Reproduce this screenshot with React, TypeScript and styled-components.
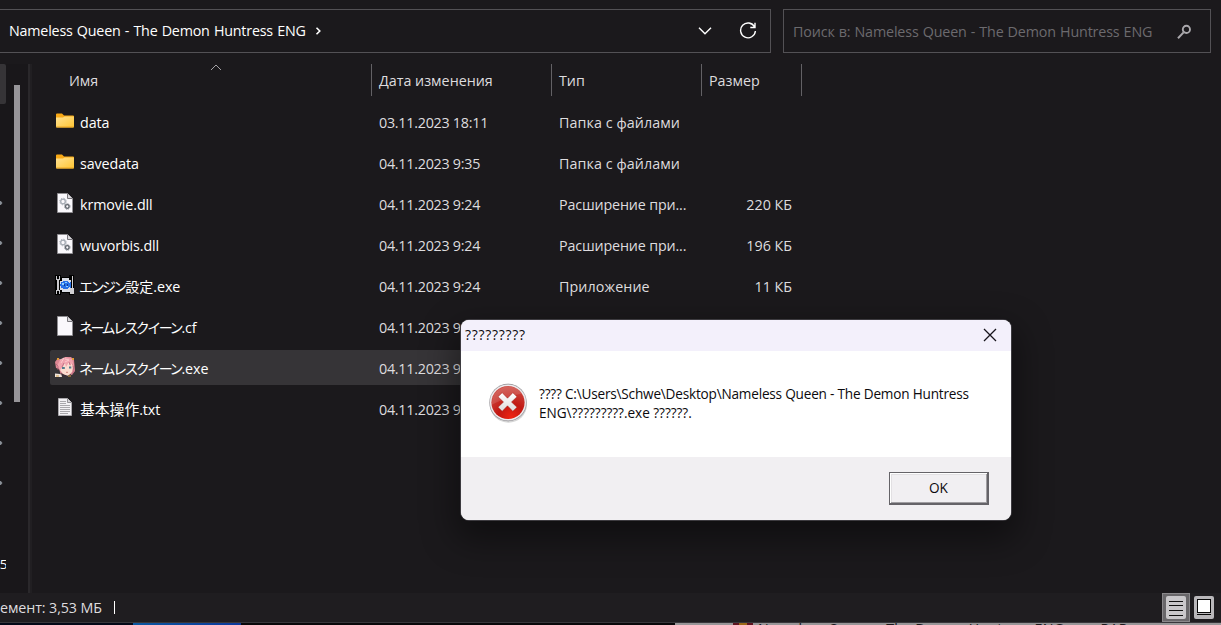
import React from "react";
import styled, { createGlobalStyle } from "styled-components";

const GlobalStyle = createGlobalStyle`
  * { box-sizing: border-box; }
  body { margin: 0; background: #1b191c; overflow: hidden; }
`;

const Screen = styled.div`
  position: relative;
  display: flex;
  flex-direction: column;
  width: 1221px;
  height: 625px;
  overflow: hidden;
  background: #1b191c;
  color: #dedcdf;
  font-family: "Open Sans", "Noto Sans", "Noto Sans CJK JP", sans-serif;
  font-size: 14.3px;
  letter-spacing: -0.1px;
  line-height: 20px;
  white-space: nowrap;
`;

const Toolbar = styled.div`
  display: flex;
  flex: none;
  gap: 12px;
  height: 64px;
  padding: 9px 10px 11px 0;
`;

const AddressBar = styled.div`
  display: flex;
  align-items: center;
  width: 771px;
  height: 44px;
  padding: 0 13px 0 9px;
  border: 1px solid #535155;
  border-left: 0;
  color: #fff;
`;

const Crumb = styled.span`
  width: 296px;
  letter-spacing: -0.2px;
  word-spacing: 0.7px;
`;

const CrumbArrow = styled.svg`
  margin: 0 auto 0 9px;
`;

const RefreshIcon = styled.svg`
  margin-left: 27px;
`;

const SearchBox = styled.div`
  display: flex;
  align-items: center;
  justify-content: space-between;
  flex: 1;
  height: 44px;
  padding: 2px 18px 0 9px;
  border: 1px solid #535155;
  color: #6c6a6e;
`;

const SearchText = styled.span`
  letter-spacing: -0.14px;
  word-spacing: 0.5px;
`;

const Body = styled.div`
  display: flex;
  flex: none;
  height: 529px;
`;

const NavPane = styled.div`
  display: flex;
  width: 32px;
  background: #19171a;
`;

const NavTree = styled.div`
  width: 6px;
  overflow: hidden;
`;

const NavItem = styled.div<{ $selected?: boolean }>`
  display: flex;
  align-items: center;
  justify-content: flex-end;
  height: 40px;
  background: ${(p) => (p.$selected ? "#363437" : "transparent")};
  border-radius: 0 2px 2px 0;
  color: #fff;
  font-size: 13.5px;
`;

const NavLabel = styled.span`
  margin-right: -1.5px;
`;

const NavArrow = styled.svg`
  margin: 0 auto 3px 0;
`;

const ScrollThumb = styled.div`
  width: 6px;
  height: 317px;
  margin: 21px 8px 0;
  background: #979599;
`;

const PaneDivider = styled.div`
  width: 4px;
  background: #211f22;
  border-left: 2px solid #2a282b;
`;

const FileList = styled.div`
  flex: 1;
  padding-left: 18px;
`;

const HeaderRow = styled.div`
  display: grid;
  grid-template-columns: 322px 180px 150px 100px;
  height: 32px;
  margin-bottom: 8px;
`;

const HeaderCell = styled.div<{ $indent: number }>`
  display: flex;
  align-items: center;
  padding: 2px 0 0 ${(p) => p.$indent}px;
  border-right: 1px solid #636165;
  letter-spacing: 0;
`;

const SortArrow = styled.svg`
  margin: -28px 0 0 112px;
`;

const Row = styled.div<{ $selected?: boolean }>`
  display: grid;
  grid-template-columns: 329px 180px 133px 100px;
  align-items: center;
  width: 752px;
  height: 35px;
  margin-bottom: 6px;
  background: ${(p) => (p.$selected ? "#363437" : "transparent")};
  border-radius: 2px;
`;

const NameCell = styled.div`
  display: flex;
  align-items: center;
  gap: 5px;
  padding-left: 5px;
  color: #fff;
`;

const IconSlot = styled.span`
  display: flex;
  width: 20px;
  height: 20px;
  margin-top: -1px;
`;

const FileName = styled.span`
  padding-top: 2px;
  letter-spacing: -0.1px;
`;

const Kana = styled.span`
  font-family: "Noto Sans CJK JP", sans-serif;
  font-size: 14px;
  letter-spacing: -2.55px;
  margin: 0 0.5px 0 -1px;
`;

const Kanji = styled.span<{ $size: number }>`
  font-family: "Noto Sans CJK JP", sans-serif;
  font-size: ${(p) => p.$size}px;
  letter-spacing: 0;
`;

const Cell = styled.div<{ $spacing?: number }>`
  padding-top: 2px;
  letter-spacing: ${(p) => p.$spacing ?? 0}px;
`;

const SizeCell = styled(Cell)`
  text-align: right;
`;

const StatusBar = styled.div`
  display: flex;
  flex: none;
  align-items: center;
  height: 29px;
  padding-right: 3px;
  background: #1f1d20;
`;

const StatusText = styled.span`
  width: 102px;
  letter-spacing: -0.1px;
`;

const StatusDivider = styled.div`
  width: 1px;
  height: 13px;
  margin: 0 auto 0 12px;
  background: #fff;
`;

const ViewButton = styled.div<{ $active?: boolean }>`
  display: flex;
  align-items: center;
  justify-content: center;
  width: 28px;
  height: 29px;
  background: ${(p) => (p.$active ? "#69676a" : "transparent")};
  border: 1px solid ${(p) => (p.$active ? "#8a888b" : "transparent")};
`;

const Taskbar = styled.div`
  display: flex;
  flex: none;
  height: 3px;
  border-top: 1px solid #38373b;
  overflow: hidden;
`;

const Strip = styled.div<{ $width: number; $fill: string }>`
  width: ${(p) => p.$width}px;
  background: ${(p) => p.$fill};
`;

const BackWindow = styled.div`
  display: flex;
  flex: 1;
  gap: 5px;
  padding-left: 58px;
  background: #989698;
  color: #1b191c;
  font-size: 14.3px;
  letter-spacing: 0.15px;
`;

const BackIcon = styled.div`
  width: 20px;
  height: 3px;
  background: linear-gradient(90deg, #5e1420 30%, #9c6a18 30% 70%, #5e1420 70%);
`;

const BackTitle = styled.span`
  margin-top: -4px;
`;

const Dialog = styled.div`
  position: absolute;
  left: 461px;
  top: 320px;
  display: flex;
  flex-direction: column;
  width: 550px;
  height: 200px;
  border-radius: 8px;
  overflow: hidden;
  background: #fff;
  color: #0c0a0d;
  box-shadow: 0 0 0 1px #3d3b40, 0 14px 34px 6px rgba(0, 0, 0, 0.42);
`;

const DialogTitle = styled.div`
  display: flex;
  align-items: center;
  justify-content: space-between;
  height: 31px;
  padding: 0 14px 2px 4px;
  background: #f3f0fb;
  font-size: 14px;
  letter-spacing: 0.7px;
`;

const DialogContent = styled.div`
  display: flex;
  height: 106px;
  padding: 32px 0 0 27px;
  gap: 11px;
`;

const Message = styled.div`
  padding-top: 1px;
  font-size: 13.6px;
  line-height: 19px;
  white-space: pre;
`;

const MessageLine = styled.div<{ $spacing: number }>`
  letter-spacing: ${(p) => p.$spacing}px;
`;

const DialogFooter = styled.div`
  display: flex;
  justify-content: flex-end;
  flex: 1;
  padding: 15px 22px 0 0;
  background: #f1eff2;
`;

const OkButton = styled.button`
  width: 100px;
  height: 33px;
  padding: 0 0 2px;
  background: #f1eff2;
  border: 1px solid #656368;
  border-right-width: 2px;
  border-bottom-width: 2px;
  box-shadow: inset 1px 1px #fff, inset -1px -1px #a09ea2, inset 2px 2px #e2e0e3;
  color: #0c0a0d;
  font-family: inherit;
  font-size: 13.6px;
`;

const FolderIcon = () => (
  <svg width="20" height="20" viewBox="0 0 20 20">
    <defs>
      <linearGradient id="folder" x1="0" y1="0" x2="1" y2="1">
        <stop offset="0" stopColor="#ffe294" />
        <stop offset="1" stopColor="#ffc532" />
      </linearGradient>
    </defs>
    <path d="M1 3.5q0-1 1-1h5l2 2h9q1 0 1 1v4H1z" fill="#f9a915" />
    <path d="M1 6.5h7l1.5-1H19v10q0 1-1 1H2q-1 0-1-1z" fill="url(#folder)" />
    <path d="M1.3 16h17.4" stroke="#eca522" />
  </svg>
);

const PageIcon = ({ children }: { children?: React.ReactNode }) => (
  <svg width="20" height="20" viewBox="0 0 20 20">
    <path d="M2.5 .5h10l5 5v14h-15z" fill="#faf8fc" stroke="#8f8d91" />
    <path d="M12.5 .5v5h5" fill="#dad8dc" stroke="#77757a" />
    {children}
  </svg>
);

const DllIcon = () => (
  <PageIcon>
    <circle cx="8" cy="8.5" r="2.3" fill="none" stroke="#a5abb4" strokeWidth="1.3" />
    <circle cx="8" cy="8.5" r="3.3" fill="none" stroke="#a5abb4" strokeDasharray="1.2 1.4" />
    <circle cx="12.3" cy="13.5" r="1.8" fill="none" stroke="#5d636b" strokeWidth="1.3" />
    <circle cx="12.3" cy="13.5" r="2.7" fill="none" stroke="#5d636b" strokeDasharray="1 1.1" />
  </PageIcon>
);

const TextIcon = () => (
  <svg width="20" height="20" viewBox="0 0 20 20">
    <path d="M3.5 .5h9l4 4v13h-13z" fill="#f3f1f4" stroke="#aaa8ac" />
    <path d="M12.5 .5v4h4" fill="#d6d4d8" stroke="#939195" />
    <path d="M5 3.5h6M5 5.5h6M5 7.5h10M5 9.5h10M5 11.5h10M5 13.5h10M5 15.5h8" stroke="#a9a7ab" />
  </svg>
);

const EngineIcon = () => (
  <svg width="20" height="20" viewBox="0 0 20 20" shapeRendering="crispEdges">
    <path d="M0 0h6v2h8V0h5v20h-5v-2H6v2H0z" fill="#000" />
    <path d="M7 3h7v2h2v10h-1v2H7v-2H5V6h2z" fill="#d9dce5" />
    <path d="M6 7h2V6h5v1h1v1h1V7h1v6h-1v-1h-1v1h-1v1H8v-1H6v-2H5V9h1z" fill="#2671e8" />
    <path d="M7 8h2v2H7zM10 7h2v1h-2zM11 11h2v1h-2z" fill="#8bd0ff" />
    <path d="M9 9h1v2H9zM12 9h1v2h-1z" fill="#123a92" />
    <path d="M1 1h1v3h2V1h1v4H4v10h1v4H4v-3H2v3H1v-4h1V5H1z" fill="#c9c8cd" />
    <path d="M17 1h1v12h1v6h-4v-6h2z" fill="#d2d0d4" />
  </svg>
);

const PortraitIcon = () => (
  <svg width="20" height="20" viewBox="0 0 20 20">
    <path d="M0 5l3-4 3 2 4-3h6l3 3 1 11-3 4H6L4 12 1 11z" fill="#dc8794" />
    <path d="M5 7l4-4 7 2 2 5-1 5-4 4-5-2-3-4z" fill="#fbdcd0" />
    <path d="M2 9l3-6 6-3 6 2 2 7-2-3-2 3-1-4-3 5-1-4-3 5-2 2z" fill="#f0a3ae" />
    <path d="M5 3l4-2-3 5M10 2l4 1-4 2" fill="none" stroke="#ffd2d3" strokeWidth=".8" />
    <path d="M1 7l2 2v4M18 9l1 5-2 3M9 6l-2 4M14 5l1 3" fill="none" stroke="#b4637a" strokeWidth=".8" />
    <path d="M7 11h2.8M14 10.5h2.3" stroke="#527c8c" strokeWidth="1.8" />
    <path d="M11 15.3h2" stroke="#c16b66" strokeWidth=".8" />
    <path d="M2 1h2v2H2zM17 1h2v2h-2z" fill="#e19a38" />
    <path d="M0 16.5l5 .5 4 2v1H0z" fill="#f0e5de" />
    <path d="M6 16l6 3 4-2 1 3H7z" fill="#393038" />
    <path d="M1 19h3M13 19h3" stroke="#d3a147" />
  </svg>
);

const ErrorIcon = () => (
  <svg width="40" height="41" viewBox="0 0 40 41">
    <defs>
      <linearGradient id="rim" x1="0" y1="0" x2="0" y2="1">
        <stop offset="0" stopColor="#89878b" />
        <stop offset=".3" stopColor="#b9b6b9" />
        <stop offset="1" stopColor="#8d8b90" />
      </linearGradient>
      <radialGradient id="red" cx=".6" cy=".95" r=".9">
        <stop offset="0" stopColor="#f02412" />
        <stop offset=".45" stopColor="#c21812" />
        <stop offset="1" stopColor="#cc4a42" />
      </radialGradient>
      <linearGradient id="cross" x1="0" y1="0" x2="0" y2="1">
        <stop offset="0" stopColor="#fff" />
        <stop offset="1" stopColor="#dedbdc" />
      </linearGradient>
    </defs>
    <ellipse cx="20.5" cy="21.7" rx="18.5" ry="18" fill="#000" opacity=".16" />
    <circle cx="20" cy="19.5" r="18.8" fill="url(#rim)" />
    <circle cx="20" cy="19.5" r="18" fill="#eeebed" />
    <circle cx="20" cy="19.5" r="16.6" fill="url(#red)" />
    <path d="M4 21.5A16.5 16.5 0 0 1 34 10.5Q22 12.500 4 21.5z" fill="#fff" opacity=".13" />
    <path d="M14.200 9.700l5.300 5.500 5.300-5.500 4.200 4.100-5.500 5.200 5.500 5.200-4.200 4.100-5.300-5.500-5.300 5.500-4.200-4.100 5.500-5.200-5.500-5.200z" fill="url(#cross)" stroke="#a2221c" strokeWidth=".5" />
  </svg>
);

const icons = {
  folder: FolderIcon,
  dll: DllIcon,
  engine: EngineIcon,
  page: PageIcon,
  portrait: PortraitIcon,
  text: TextIcon,
};

type FileItem = {
  icon: keyof typeof icons;
  kana?: string;
  kanji?: string;
  name: string;
  date: string;
  type?: string;
  typeSpacing?: number;
  size?: string;
  selected?: boolean;
};

const files: FileItem[] = [
  { icon: "folder", name: "data", date: "03.11.2023 18:11", type: "Папка с файлами", typeSpacing: 0.08 },
  { icon: "folder", name: "savedata", date: "04.11.2023 9:35", type: "Папка с файлами", typeSpacing: 0.08 },
  { icon: "dll", name: "krmovie.dll", date: "04.11.2023 9:24", type: "Расширение при...", size: "220 КБ" },
  { icon: "dll", name: "wuvorbis.dll", date: "04.11.2023 9:24", type: "Расширение при...", size: "196 КБ" },
  { icon: "engine", kana: "エンジン", kanji: "設定", name: ".exe", date: "04.11.2023 9:24", type: "Приложение", typeSpacing: 0.1, size: "11 КБ" },
  { icon: "page", kana: "ネームレスクイーン", name: ".cf", date: "04.11.2023 9:24" },
  { icon: "portrait", kana: "ネームレスクイーン", name: ".exe", date: "04.11.2023 9:24", selected: true },
  { icon: "text", kanji: "基本操作", name: ".txt", date: "04.11.2023 9:24" },
];

const navItems = Array.from({ length: 13 }, (_, i) => i);

export default function App() {
  return (
    <Screen>
      <GlobalStyle />
      <Toolbar>
        <AddressBar>
          <Crumb>Nameless Queen - The Demon Huntress ENG</Crumb>
          <CrumbArrow width="8" height="10" viewBox="0 0 8 10">
            <path d="M2.5 1.7L5.8 5 2.5 8.3" fill="none" stroke="#fff" strokeWidth="1.6" />
          </CrumbArrow>
          <svg width="14" height="10" viewBox="0 0 14 10">
            <path d="M1 1.8l6 6 6-6" fill="none" stroke="#fff" strokeWidth="1.4" />
          </svg>
          <RefreshIcon width="18" height="18" viewBox="0 0 18 18">
            <path d="M15.6 5A7.4 7.4 0 1 0 16.4 9M16 .8v4.7h-4.7" fill="none" stroke="#fff" strokeWidth="1.4" />
          </RefreshIcon>
        </AddressBar>
        <SearchBox>
          <SearchText>Поиск в: Nameless Queen - The Demon Huntress ENG</SearchText>
          <svg width="15" height="16" viewBox="0 0 15 16">
            <circle cx="9.4" cy="5.4" r="3.6" fill="none" stroke="#aaa8ac" strokeWidth="1.9" />
            <path d="M6.6 8.4L1 14.3" stroke="#aaa8ac" strokeWidth="2" />
          </svg>
        </SearchBox>
      </Toolbar>

      <Body>
        <NavPane>
          <NavTree>
            {navItems.map((i) => (
              <NavItem key={i} $selected={i === 0}>
                {i > 2 && i < 11 && (
                  <NavArrow width="3" height="6" viewBox="0 0 3 6">
                    <path d="M0 1.500h1L2 3 1 4.500H0z" fill="#8b9299" stroke="#8b9299" strokeWidth=".8" />
                  </NavArrow>
                )}
                {i === 12 && <NavLabel>65</NavLabel>}
              </NavItem>
            ))}
          </NavTree>
          <ScrollThumb />
          <PaneDivider />
        </NavPane>

        <FileList>
          <HeaderRow>
            <HeaderCell $indent={19}>
              Имя
              <SortArrow width="12" height="7" viewBox="0 0 12 7">
                <path d="M1 6l5-5 5 5" fill="none" stroke="#a3a1a5" />
              </SortArrow>
            </HeaderCell>
            <HeaderCell $indent={7}>Дата изменения</HeaderCell>
            <HeaderCell $indent={7}>Тип</HeaderCell>
            <HeaderCell $indent={7}>Размер</HeaderCell>
          </HeaderRow>
          {files.map((file, i) => {
            const Icon = icons[file.icon];
            return (
              <Row key={i} $selected={file.selected}>
                <NameCell>
                  <IconSlot>
                    <Icon />
                  </IconSlot>
                  <FileName>
                    {file.kana && <Kana>{file.kana}</Kana>}
                    {file.kanji && <Kanji $size={file.kana ? 14 : 14.8}>{file.kanji}</Kanji>}
                    {file.name}
                  </FileName>
                </NameCell>
                <Cell $spacing={-0.25}>{file.date}</Cell>
                <Cell $spacing={file.typeSpacing ?? -0.15}>{file.type}</Cell>
                <SizeCell $spacing={0}>{file.size}</SizeCell>
              </Row>
            );
          })}
        </FileList>
      </Body>

      <StatusBar>
        <StatusText>емент: 3,53 МБ</StatusText>
        <StatusDivider />
        <ViewButton $active>
          <svg width="20" height="23" viewBox="0 0 20 23">
            <rect width="20" height="23" rx="2" fill="#c9c7ca" />
            <path d="M3 5.5h14M3 9.5h14M3 14.5h14M3 19.5h14" stroke="#111" />
          </svg>
        </ViewButton>
        <ViewButton>
          <svg width="20" height="23" viewBox="0 0 20 23">
            <rect width="20" height="23" rx="2" fill="#b9b7ba" />
            <rect x="3.5" y="3.5" width="13" height="13" fill="#fff" stroke="#080808" />
            <path d="M3 18.500h14" stroke="#080808" />
          </svg>
        </ViewButton>
      </StatusBar>
      <Taskbar>
        <Strip $width={133} $fill="#030817" />
        <Strip $width={108} $fill="linear-gradient(90deg, #0b579f, #0c399b)" />
        <Strip $width={434} $fill="#09080a" />
        <BackWindow>
          <BackIcon />
          <BackTitle>Nameless Queen - The Demon Huntress ENG.rar - RAR</BackTitle>
        </BackWindow>
      </Taskbar>

      <Dialog>
        <DialogTitle>
          ?????????
          <svg width="14" height="14" viewBox="0 0 14 14">
            <path d="M1 1l12 12M13 1L1 13" stroke="#17141b" strokeWidth="1.3" />
          </svg>
        </DialogTitle>
        <DialogContent>
          <ErrorIcon />
          <Message>
            <MessageLine $spacing={-0.2}>{"???? C:\\Users\\Schwe\\Desktop\\Nameless Queen - The Demon Huntress"}</MessageLine>
            <MessageLine $spacing={-0.04}>{"ENG\\?????????.exe ??????."}</MessageLine>
          </Message>
        </DialogContent>
        <DialogFooter>
          <OkButton>OK</OkButton>
        </DialogFooter>
      </Dialog>
    </Screen>
  );
}
